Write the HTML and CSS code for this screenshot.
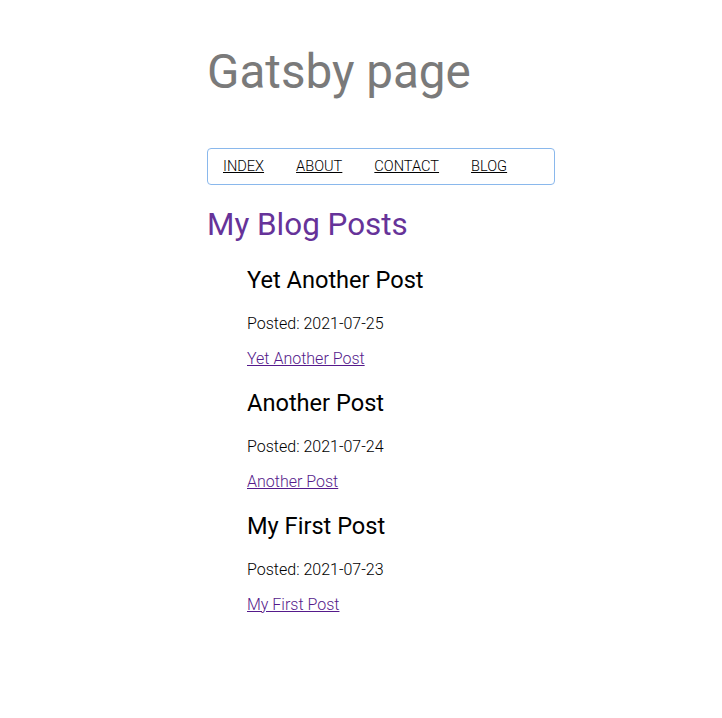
FILE: index.html
```html
<!DOCTYPE html>
<html>
<head>
<meta charset="utf-8">
<title>Gatsby page</title>
<link rel="stylesheet" href="styles.css">
</head>
<body>
<main class="container">
  <h1 class="site-title">Gatsby page</h1>
  <nav class="nav">
    <ul class="nav-links">
      <li><a class="nav-link" href="#">Index</a></li>
      <li><a class="nav-link" href="#">About</a></li>
      <li><a class="nav-link" href="#">Contact</a></li>
      <li><a class="nav-link" href="#">Blog</a></li>
    </ul>
  </nav>
  <h2 class="heading">My Blog Posts</h2>
  <ul class="posts">
    <li class="post">
      <h3 class="post-title">Yet Another Post</h3>
      <p class="post-date">Posted: 2021-07-25</p>
      <a class="post-link" href="#">Yet Another Post</a>
    </li>
    <li class="post">
      <h3 class="post-title">Another Post</h3>
      <p class="post-date">Posted: 2021-07-24</p>
      <a class="post-link" href="#">Another Post</a>
    </li>
    <li class="post">
      <h3 class="post-title">My First Post</h3>
      <p class="post-date">Posted: 2021-07-23</p>
      <a class="post-link" href="#">My First Post</a>
    </li>
  </ul>
</main>
</body>
</html>
```
FILE: styles.css
```css
html, body {
  margin: 0;
  padding: 0;
  background: #ffffff;
}
body {
  font-family: Roboto, "Liberation Sans", sans-serif;
  color: #000;
}
.container {
  width: 348px;
  margin-left: 207px;
  padding-top: 42px;
}
.site-title {
  margin: 0;
  font-size: 47.6px;
  font-weight: 400;
  line-height: 60px;
  color: #7a7a7a;
}
.nav {
  margin-top: 46px;
  border: 1px solid #8ab8ec;
  border-radius: 4px;
  box-sizing: border-box;
  height: 37px;
  display: flex;
  align-items: center;
  padding: 0 15px 2px;
}
.nav-links {
  list-style: none;
  margin: 0;
  padding: 0;
  display: flex;
  gap: 32px;
}
.nav-link {
  font-size: 14.6px;
  font-weight: 300;
  text-transform: uppercase;
  color: #000;
  text-decoration: underline;
}
.heading {
  margin: 20px 0 0;
  font-size: 31.4px;
  font-weight: 400;
  line-height: 40px;
  color: #663399;
}
.posts {
  list-style: none;
  margin: 21px 0 0;
  padding-left: 40px;
}
.post {
  margin-bottom: 18px;
}
.post-title {
  margin: 0 0 18px;
  font-size: 23.6px;
  font-weight: 400;
  line-height: 28px;
}
.post-date {
  margin: 0 0 11px;
  font-size: 16px;
  font-weight: 300;
  line-height: 24px;
}
.post-link {
  display: inline-block;
  font-size: 16px;
  font-weight: 300;
  line-height: 24px;
  color: #551a8b;
}
```
